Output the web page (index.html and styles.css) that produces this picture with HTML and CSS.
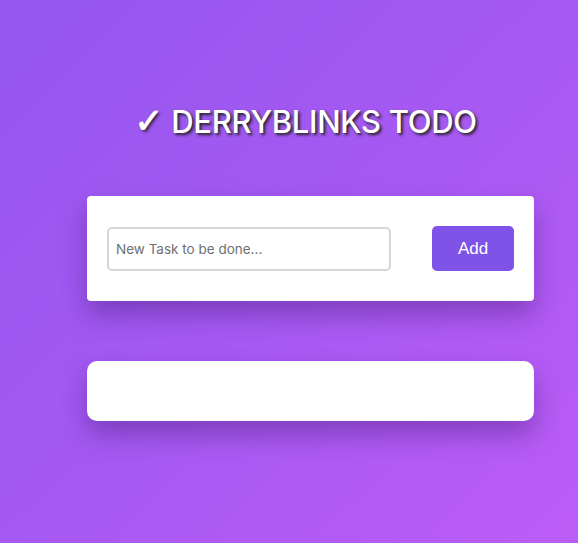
FILE: index.html
```html
<!DOCTYPE html>
<html lang="en">
<head>
<meta charset="utf-8">
<title>Derryblinks Todo</title>
<link rel="stylesheet" href="styles.css">
</head>
<body>
  <main class="app">
    <h1 class="title"><span class="check">✓</span> DERRYBLINKS TODO</h1>
    <form class="card add-card">
      <input class="task-input" type="text" placeholder="New Task to be done...">
      <button class="add-btn" type="button">Add</button>
    </form>
    <section class="card list-card"></section>
  </main>
</body>
</html>
```

FILE: styles.css
```css
html, body {
  margin: 0;
  padding: 0;
  height: 100%;
}
body {
  background: linear-gradient(135deg, #9356ee 0%, #a659f2 50%, #bc5cf6 100%);
  font-family: "Inter", "Noto Sans", sans-serif;
  overflow: hidden;
}
.app {
  padding: 103px 44px 0 87px;
  display: flex;
  flex-direction: column;
}
.title {
  margin: 0 0 56px 0;
  text-align: center;
  color: #fff;
  font-family: "Inter", sans-serif;
  font-weight: 500;
  font-size: 31px;
  line-height: 36px;
  letter-spacing: -0.3px;
  text-shadow: 2px 2px 3px #222;
  padding-right: 10px;
}
.check {
  font-family: "DejaVu Sans", sans-serif;
  font-weight: 700;
  font-size: 35px;
  line-height: 36px;
  -webkit-text-stroke: 0.8px #fff;
}
.card {
  background: #fff;
  box-shadow: 0 14px 26px rgba(60, 20, 110, 0.38);
}
.add-card {
  margin: 0;
  border-radius: 4px;
  height: 105px;
  padding: 0 20px 0 20px;
  display: flex;
  align-items: center;
  justify-content: space-between;
  box-sizing: border-box;
}
.task-input {
  width: 284px;
  height: 44px;
  box-sizing: border-box;
  border: 2px solid #d6d6d6;
  border-radius: 5px;
  padding: 0 7px;
  font-family: "Inter", sans-serif;
  font-size: 13.5px;
  color: #333;
  outline: none;
}
.task-input::placeholder {
  color: #6f6f6f;
}
.add-btn {
  width: 82px;
  height: 45px;
  border: none;
  border-radius: 5px;
  background: #7f52e8;
  color: #fff;
  font-family: "Liberation Sans", Arial, sans-serif;
  font-size: 17px;
  cursor: pointer;
}
.list-card {
  margin-top: 60px;
  height: 60px;
  border-radius: 10px;
}
```
